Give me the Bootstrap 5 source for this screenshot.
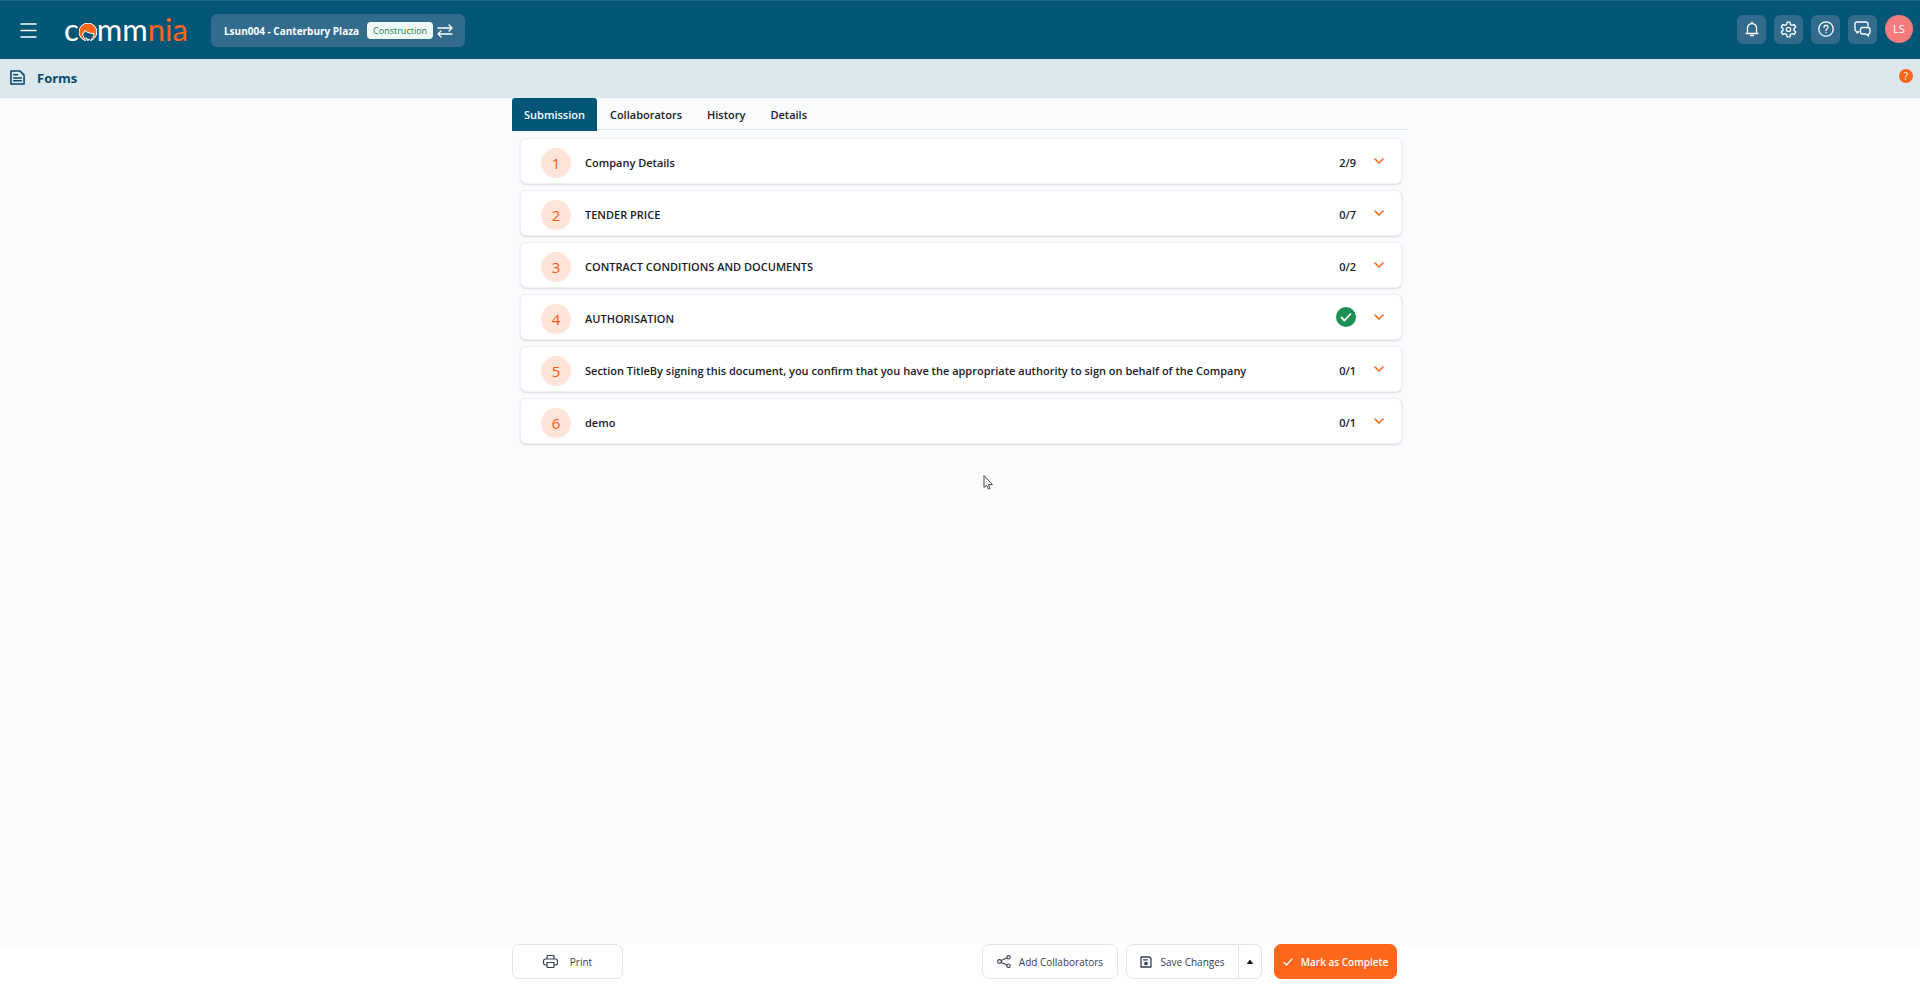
<!DOCTYPE html>
<html lang="en">
<head>
<meta charset="utf-8">
<meta name="viewport" content="width=device-width, initial-scale=1">
<title>Forms - Commnia</title>
<link href="https://cdn.jsdelivr.net/npm/bootstrap@5.3.0/dist/css/bootstrap.min.css" rel="stylesheet">
<style>
  :root { --navy: #035676; --orange: #ff671a; --ink: #1b2027; }
  body { font-family: "Open Sans", "Noto Sans", sans-serif; font-size: 11px; line-height: 18px; color: var(--ink); background: #fafbfd; }
  svg { display: block; fill: none; stroke: currentColor; stroke-linecap: round; stroke-linejoin: round; flex-shrink: 0; }
  .topbar { background: var(--navy); height: 59px; padding: 0 7px 0 20px; color: #fff; border-top: 1px solid #1d6584; }
  .plain { background: none; border: 0; padding: 0; color: inherit; }
  .brand { font-family: Lato, sans-serif; font-size: 31px; line-height: 36px; color: #fff; margin-left: 27px; padding-bottom: 3px; }
  .brand .accent { color: var(--orange); }
  .project { background: #336b8c; border: 0; border-radius: 6px; height: 33px; padding: 2px 12px 0 13px; color: #fff; font-size: 10px; font-weight: 700; margin-left: 23px; }
  .stage { background: #effaf7; color: #1d7a4c; border-radius: 4px; font-size: 9px; line-height: 17px; padding: 0 6px; font-weight: 500; margin-bottom: 2px; }
  .tools { gap: 8px; padding-bottom: 2px; }
  .tool { width: 29px; height: 29px; border-radius: 6px; background: #336b8c; border: 0; padding: 0; color: #fff; }
  .avatar { width: 28px; height: 28px; border-radius: 50%; background: #f47c7c; color: #fff; border: 0; padding: 0; }
  .titlebar { background: #dbe9ee; height: 39px; padding: 0 7px 2px 10px; color: #0b4a6b; }
  .titlebar h1 { font-size: 13px; line-height: 20px; font-weight: 700; margin-left: 12px; }
  .help { width: 14px; height: 14px; border-radius: 50%; background: var(--orange); color: #fff; font-size: 10px; line-height: 14px; margin-bottom: 4px; }
  .sheet { width: 100%; max-width: 896px; }
  .tabs { border-bottom: 1px solid #e3e6eb; height: 32px; }
  .tabs .nav-link { color: var(--ink); font-weight: 600; padding: 8px 12px 7px; margin-right: 1px; border-radius: 3px 3px 0 0; }
  .tabs .nav-link.active { background: var(--navy); color: #fff; height: 33px; }
  .section-list { padding: 8px 6px 0 8px; gap: 6px; }
  .section-row { background: #fff; border: 1px solid #eef0f5; border-radius: 6px; height: 46px; padding: 4px 17px 0 20px; box-shadow: 0 1px 2px #1a234526; font-weight: 600; color: var(--ink); }
  .num { width: 30px; height: 30px; border-radius: 50%; background: #ffe4d9; color: #ff5a14; font-size: 15px; font-weight: 500; line-height: 30px; margin-right: 14px; }
  .tick { margin-bottom: 4px; }
  .chev { color: var(--orange); margin: 0 0 4px 18px; }
  .footer { background: #fff; height: 41px; margin-top: 4px; }
  .actions { margin-top: -4px; padding: 1px 11px 5px 0; background: #fff; }
  .act { height: 35px; border: 1px solid #e1e4ec; border-radius: 7px; background: #fff; color: #344054; padding: 0; font-size: 10px; font-weight: 500; }
  .act.primary { background: var(--orange); border-color: var(--orange); color: #fff; font-weight: 600; }
  .print { width: 111px; }
  .share { width: 136px; }
  .save { width: 113px; border-radius: 7px 0 0 7px; }
  .more { width: 23px; border-left: 0; border-radius: 0 7px 7px 0; }
  .done { width: 123px; margin-left: 12px; }
  .pointer { position: absolute; left: 51.200%; top: 475px; }
</style>
</head>
<body class="d-flex flex-column min-vh-100">
<header class="topbar d-flex align-items-center">
  <button class="plain" aria-label="Menu"><svg width="17" height="16" stroke-width="1.500"><path d="M1 2h15M1 8.500h15M1 15h15"/></svg></button>
  <a href="#" class="brand d-flex align-items-baseline text-decoration-none" aria-label="commnia"><span>c</span><svg width="18" height="18" viewBox="0 0 18 18" stroke="none"><circle cx="9" cy="9" r="9" fill="#ff671a"/><path d="M3.500 11C5 10.500 5.500 9 5.500 7.500c3 2.500 7 3 9.500 3 0 3-1.500 5-3 6L11.500 18.500h-5C6.500 15.500 4 14 3.500 11z" fill="#035676"/><path d="M7 15l2 1.500 1.500-.2L9 17.500z" fill="#ff671a"/></svg><span>mm</span><span class="accent">nia</span></a>
  <button class="project d-flex align-items-center"><span>Lsun004 - Canterbury Plaza</span><span class="stage ms-2">Construction</span><svg class="ms-1" width="16" height="14" viewBox="0 0 16 14" stroke-width="1.300"><path d="M1 4h14M12 1l3 3-3 3M15 10H1M4 7l-3 3 3 3"/></svg></button>
  <div class="tools ms-auto d-flex align-items-center">
    <button class="tool d-flex align-items-center justify-content-center" aria-label="Notifications"><svg width="16" height="16" viewBox="0 0 16 16" stroke-width="1.300"><path d="M2 12.500h12M3.500 12.500V7a4.500 4.500 0 0 1 9 0v5.500M8 2.500V1M6.500 14.500h3"/></svg></button>
    <button class="tool d-flex align-items-center justify-content-center" aria-label="Settings"><svg width="17" height="17" viewBox="0 0 24 24" stroke-width="1.900"><circle cx="12" cy="12" r="3"/><path d="M10 1.500h4l.7 3.400 2.300 1.300 3.200-1.200 2 3.500L19.700 11v2l2.500 2.500-2 3.500-3.200-1.200-2.300 1.300-.7 3.400h-4l-.7-3.400L7 17.800 3.800 19l-2-3.500L4.300 13v-2L1.800 8.500l2-3.500L7 6.200l2.300-1.300z"/></svg></button>
    <button class="tool d-flex align-items-center justify-content-center" aria-label="Help"><svg width="16" height="16" viewBox="0 0 16 16" stroke-width="1.300"><circle cx="8" cy="8" r="7.200"/><path d="M6 6.300a2 2 0 1 1 3 1.700c-.8.400-1 .8-1 1.500M8 11.600v.1"/></svg></button>
    <button class="tool d-flex align-items-center justify-content-center" aria-label="Chat"><svg width="17" height="16" viewBox="0 0 17 16" stroke-width="1.300"><path d="M5 10.500l-2 1.500v-1.500a2 2 0 0 1-2-2V3a2 2 0 0 1 2-2h9a2 2 0 0 1 2 2v2"/><path d="M8.500 6.500H14a2 2 0 0 1 2 2V11a2 2 0 0 1-1.500 2v2L12 13H8.500a2 2 0 0 1-2-2V8.500a2 2 0 0 1 2-2z"/></svg></button>
    <button class="avatar">LS</button>
  </div>
</header>
<div class="titlebar d-flex align-items-center">
  <svg width="15" height="15" viewBox="0 0 16 16" stroke-width="1.700"><path d="M1 1h9.500L15 5.500V15H1zM4 5h4M4 8.500h8M4 11.500h8"/></svg>
  <h1 class="mb-0">Forms</h1>
  <button class="plain help ms-auto" aria-label="Page help">?</button>
</div>
<main class="sheet mx-auto flex-grow-1">
  <nav class="nav tabs flex-nowrap">
    <a class="nav-link active" href="#">Submission</a>
    <a class="nav-link" href="#">Collaborators</a>
    <a class="nav-link" href="#">History</a>
    <a class="nav-link" href="#">Details</a>
  </nav>
  <div class="section-list d-grid">
    <button class="section-row d-flex align-items-center text-start"><span class="num text-center">1</span><span>Company Details</span><span class="ms-auto">2/9</span><svg class="chev" width="10" height="6" viewBox="0 0 10 6" stroke-width="1.600"><path d="M1 1l4 4 4-4"/></svg></button>
    <button class="section-row d-flex align-items-center text-start"><span class="num text-center">2</span><span>TENDER PRICE</span><span class="ms-auto">0/7</span><svg class="chev" width="10" height="6" viewBox="0 0 10 6" stroke-width="1.600"><path d="M1 1l4 4 4-4"/></svg></button>
    <button class="section-row d-flex align-items-center text-start"><span class="num text-center">3</span><span>CONTRACT CONDITIONS AND DOCUMENTS</span><span class="ms-auto">0/2</span><svg class="chev" width="10" height="6" viewBox="0 0 10 6" stroke-width="1.600"><path d="M1 1l4 4 4-4"/></svg></button>
    <button class="section-row d-flex align-items-center text-start"><span class="num text-center">4</span><span>AUTHORISATION</span><svg class="tick ms-auto" width="20" height="20" viewBox="0 0 20 20" stroke-width="1.800"><circle cx="10" cy="10" r="10" fill="#1c9152" stroke="none"/><path d="M5.500 10.500l3 3 6-6.500" stroke="#fff"/></svg><svg class="chev" width="10" height="6" viewBox="0 0 10 6" stroke-width="1.600"><path d="M1 1l4 4 4-4"/></svg></button>
    <button class="section-row d-flex align-items-center text-start"><span class="num text-center">5</span><span>Section TitleBy signing this document, you confirm that you have the appropriate authority to sign on behalf of the Company</span><span class="ms-auto">0/1</span><svg class="chev" width="10" height="6" viewBox="0 0 10 6" stroke-width="1.600"><path d="M1 1l4 4 4-4"/></svg></button>
    <button class="section-row d-flex align-items-center text-start"><span class="num text-center">6</span><span>demo</span><span class="ms-auto">0/1</span><svg class="chev" width="10" height="6" viewBox="0 0 10 6" stroke-width="1.600"><path d="M1 1l4 4 4-4"/></svg></button>
  </div>
</main>
<footer class="footer">
  <div class="sheet actions mx-auto d-flex">
    <button class="act print d-flex align-items-center justify-content-center gap-2"><svg width="15" height="13" viewBox="0 0 15 13" stroke-width="1.200"><path d="M4 4V1.500a1 1 0 0 1 1-1h5a1 1 0 0 1 1 1V4M4 10H2.500a2 2 0 0 1-2-2V6a2 2 0 0 1 2-2h10a2 2 0 0 1 2 2v2a2 2 0 0 1-2 2H11M4 7.500h7v4a1 1 0 0 1-1 1H5a1 1 0 0 1-1-1z"/></svg><span class="ms-1">Print</span></button>
    <button class="act share ms-auto d-flex align-items-center justify-content-center gap-2"><svg width="14" height="13" viewBox="0 0 14 13" stroke-width="1.100"><circle cx="2.500" cy="6.500" r="1.900"/><circle cx="11.500" cy="2.300" r="1.700"/><circle cx="11.500" cy="10.700" r="1.700"/><path d="M4.300 5.600L9.900 3M4.300 7.400L9.900 10"/></svg>Add Collaborators</button>
    <div class="d-flex ms-2">
      <button class="act save d-flex align-items-center justify-content-center gap-2"><svg width="12" height="12" viewBox="0 0 12 12" stroke-width="1.300"><path d="M1 1h8.500L11 2.500V11H1zM3.500 3.800h4"/><circle cx="6" cy="7.500" r="1.200" fill="currentColor"/></svg>Save Changes</button>
      <button class="act more d-flex align-items-center justify-content-center" aria-label="More save options"><svg width="6" height="4" viewBox="0 0 6 4" stroke="none"><path d="M0 4l3-4 3 4z" fill="#111"/></svg></button>
    </div>
    <button class="act primary done d-flex align-items-center justify-content-center"><svg class="me-2" width="10" height="8" viewBox="0 0 10 8" stroke-width="1.200"><path d="M1 4.500L3.500 7 9 1"/></svg>Mark as Complete</button>
  </div>
</footer>
<svg class="pointer" width="10" height="15" viewBox="0 0 10 15" stroke-width="1"><path d="M1 1v11.500l2.600-2.300 1.700 3.800 1.700-.8-1.600-3.600H9z" fill="#fff" stroke="#444"/></svg>
<script src="https://cdn.jsdelivr.net/npm/bootstrap@5.3.0/dist/js/bootstrap.bundle.min.js"></script>
</body>
</html>
